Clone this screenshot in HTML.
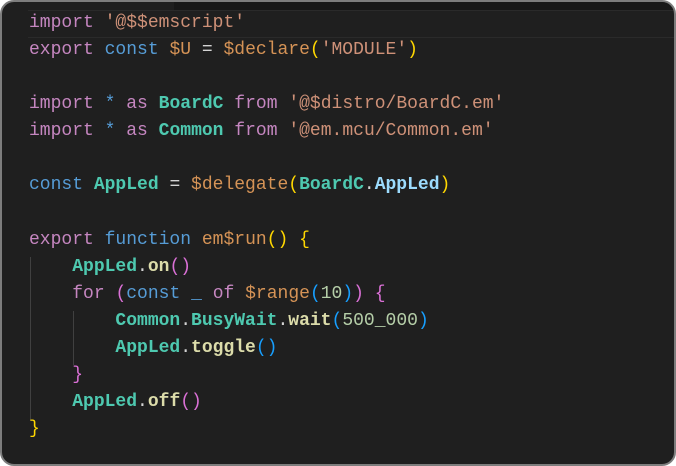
<!DOCTYPE html>
<html><head><style>
html,body{margin:0;padding:0;background:#fff;}
.f{position:absolute;left:0;top:0;width:672px;height:462px;border:2px solid #7d7d7d;border-radius:14px;background:#1f1f1f;overflow:hidden;}
.top{position:absolute;left:172px;top:0;right:0;height:8px;background:#181818;}
.cur{position:absolute;left:26px;top:8px;right:0;height:26px;border-top:1px solid #2a2a2a;border-bottom:1px solid #2a2a2a;}
pre{position:absolute;left:27px;top:8px;margin:0;font-family:"Liberation Mono",monospace;font-size:18px;line-height:27.07px;color:#d4d4d4;}
.g{position:absolute;width:1px;background:#404040;}
.k{color:#c586c0}.b{color:#569cd6}.s{color:#ce9178}.o{color:#d59356}.t{color:#4ec9b0;font-weight:bold}.v{color:#9cdcfe;font-weight:bold}
.fn{color:#dcdcaa;font-weight:bold}.n{color:#b5cea8}.y{color:#ffd700}.p{color:#da70d6}.l{color:#179fff}
</style></head><body>
<div class="f">
<div class="top"></div>
<div class="cur"></div>
<div class="g" style="left:28px;top:255px;height:164px"></div>
<div class="g" style="left:71px;top:309px;height:54px"></div>
<pre><span class="k">import</span> <span class="s">'@$$emscript'</span>
<span class="k">export</span> <span class="b">const</span> <span class="o">$U</span> = <span class="o">$declare</span><span class="y">(</span><span class="s">'MODULE'</span><span class="y">)</span>

<span class="k">import</span> <span class="b">*</span> <span class="k">as</span> <span class="t">BoardC</span> <span class="k">from</span> <span class="s">'@$distro/BoardC.em'</span>
<span class="k">import</span> <span class="b">*</span> <span class="k">as</span> <span class="t">Common</span> <span class="k">from</span> <span class="s">'@em.mcu/Common.em'</span>

<span class="b">const</span> <span class="t">AppLed</span> = <span class="o">$delegate</span><span class="y">(</span><span class="t">BoardC</span>.<span class="v">AppLed</span><span class="y">)</span>

<span class="k">export</span> <span class="b">function</span> <span class="o">em$run</span><span class="y">()</span> <span class="y">{</span>
    <span class="t">AppLed</span>.<span class="fn">on</span><span class="p">()</span>
    <span class="k">for</span> <span class="p">(</span><span class="b">const</span> <span class="b">_</span> <span class="k">of</span> <span class="o">$range</span><span class="l">(</span><span class="n">10</span><span class="l">)</span><span class="p">)</span> <span class="p">{</span>
        <span class="t">Common</span>.<span class="t">BusyWait</span>.<span class="fn">wait</span><span class="l">(</span><span class="n">500_000</span><span class="l">)</span>
        <span class="t">AppLed</span>.<span class="fn">toggle</span><span class="l">()</span>
    <span class="p">}</span>
    <span class="t">AppLed</span>.<span class="fn">off</span><span class="p">()</span>
<span class="y">}</span></pre>
</div>
</body></html>
